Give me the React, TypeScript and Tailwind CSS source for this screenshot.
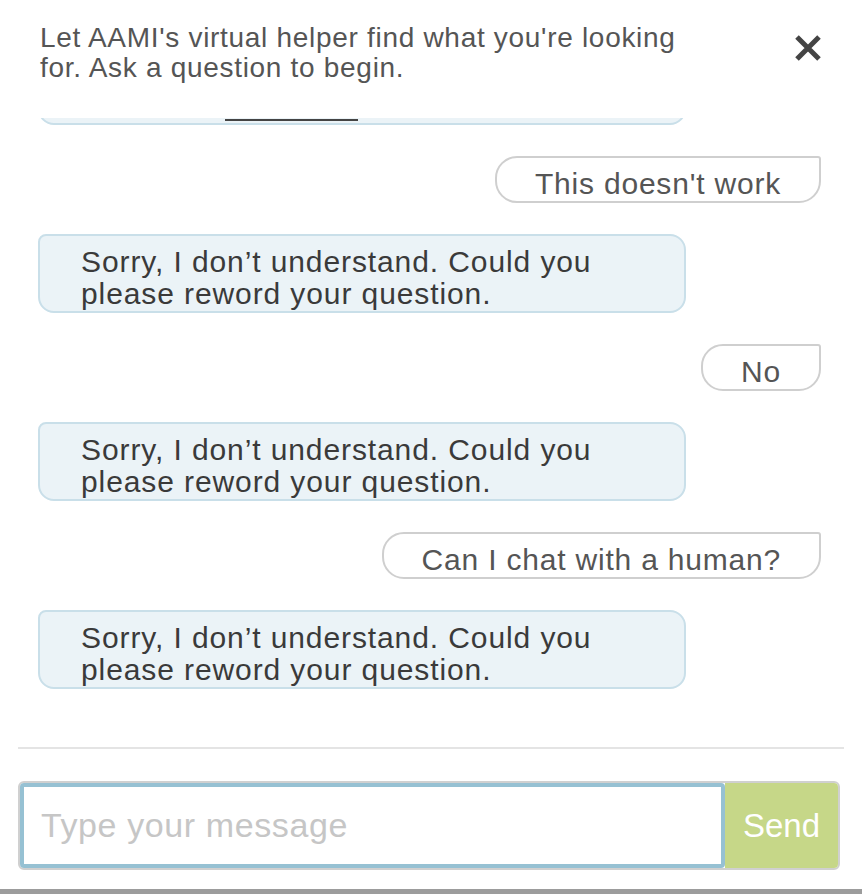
import React from 'react'

type Msg = { from: 'bot' | 'user'; text: string }

const messages: Msg[] = [
  { from: 'user', text: "This doesn't work" },
  { from: 'bot', text: 'Sorry, I don’t understand. Could you please reword your question.' },
  { from: 'user', text: 'No' },
  { from: 'bot', text: 'Sorry, I don’t understand. Could you please reword your question.' },
  { from: 'user', text: 'Can I chat with a human?' },
  { from: 'bot', text: 'Sorry, I don’t understand. Could you please reword your question.' },
]

function BotBubble({ children }: { children: React.ReactNode }) {
  return (
    <div className="box-border h-[79px] w-[648px] shrink-0 rounded-[16px] rounded-tl-[8px] border-2 border-[#c9dfe9] bg-[#ebf3f7] pl-[41px] pr-[50px] pt-[10px] text-[30px] leading-[32px] tracking-[0.9px] text-[#3a3a3a]">
      {children}
    </div>
  )
}

function UserBubble({ text }: { text: string }) {
  return (
    <div className="box-border h-[47px] shrink-0 self-end whitespace-nowrap rounded-[22px] rounded-tr-[3px] border-2 border-[#cfcfcf] bg-white pl-[38px] pr-[38px] pt-[8px] text-[30px] leading-[35px] tracking-[0.8px] text-[#555]">
      {text}
    </div>
  )
}

export default function App() {
  return (
    <div
      className="flex h-[894px] w-[862px] flex-col overflow-hidden bg-white"
      style={{ fontFamily: '"Liberation Sans", Arial, sans-serif' }}
    >
      {/* Header */}
      <div className="flex h-[118px] shrink-0 justify-between px-[40px] pt-[23px]">
        <p className="w-[650px] text-[28px] leading-[30px] tracking-[0.7px] text-[#555]">
          Let AAMI's virtual helper find what you're looking for. Ask a question to begin.
        </p>
        <button type="button" aria-label="Close" className="mt-[11px] h-[28px] w-[28px] text-[#444]">
          <svg width="28" height="28" viewBox="0 0 28 28" fill="none" aria-hidden="true">
            <path d="M3 3l22 22M25 3L3 25" stroke="currentColor" strokeWidth="5" />
          </svg>
        </button>
      </div>

      {/* Messages (scrolled, earliest one cut off at the top) */}
      <div className="flex h-[602px] shrink-0 flex-col justify-end gap-[31px] overflow-hidden pb-[31px] pl-[38px] pr-[41px]">
        <div className="box-border flex h-[79px] w-[648px] shrink-0 items-end rounded-[16px] border-2 border-[#c9dfe9] bg-[#ebf3f7] pb-[2px] pl-[185px]">
          <span className="h-[2px] w-[133px] bg-[#444]" />
        </div>
        {messages.map((m, i) =>
          m.from === 'bot' ? (
            <BotBubble key={i}>{m.text}</BotBubble>
          ) : (
            <UserBubble key={i} text={m.text} />
          )
        )}
      </div>

      {/* Divider */}
      <div className="mx-[18px] mt-[27px] h-[2px] shrink-0 bg-[#e4e4e4]" />

      {/* Input */}
      <div className="mx-[18px] mt-[32px] box-border flex h-[89px] w-[822px] shrink-0 rounded-[6px] border-2 border-[#d0d0d0]">
        <input
          type="text"
          placeholder="Type your message"
          className="box-border h-full min-w-0 flex-1 rounded-[4px] border-4 border-[#96c1d3] bg-white pl-[17px] text-[34px] tracking-[0.6px] text-[#444] outline-none placeholder:text-[#c6c6c6]"
        />
        <button
          type="button"
          className="h-full w-[113px] rounded-r-[4px] bg-[#c6d788] text-[33px] text-white"
        >
          Send
        </button>
      </div>

      <div className="mt-[19px] h-[5px] shrink-0 bg-[#9c9c9c]" />
    </div>
  )
}
